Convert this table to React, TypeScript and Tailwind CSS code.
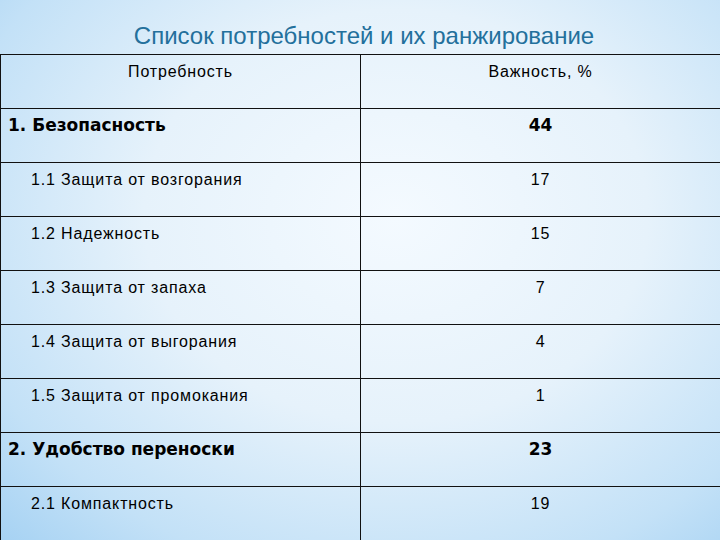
import React from 'react';

type Row = { label: string; value: string; main?: boolean };

const rows: Row[] = [
  { label: '1. Безопасность', value: '44', main: true },
  { label: '1.1 Защита от возгорания', value: '17' },
  { label: '1.2 Надежность', value: '15' },
  { label: '1.3 Защита от запаха', value: '7' },
  { label: '1.4 Защита от выгорания', value: '4' },
  { label: '1.5 Защита от промокания', value: '1' },
  { label: '2. Удобство переноски', value: '23', main: true },
  { label: '2.1 Компактность', value: '19' },
];

export default function App() {
  return (
    <div className="w-[720px] h-[540px] overflow-hidden bg-[radial-gradient(ellipse_at_55%_40%,#f4faff_0%,#e6f2fb_45%,#c3e1f7_80%,#a6d2f3_100%)] font-['Liberation_Sans',sans-serif] text-black">
      {/* Title */}
      <div className="h-[54px] flex items-start justify-center pt-[22px] pl-[8px]">
        <h1 className="text-[24px] leading-[28px] text-[#23709c]">
          Список потребностей и их ранжирование
        </h1>
      </div>

      {/* Table */}
      <div className="grid grid-cols-[360px_360px] text-[16px] leading-[20px] tracking-[0.85px]">
        <div className="h-[54px] border-t border-l border-[#111] text-center pt-[7px]">
          Потребность
        </div>
        <div className="h-[54px] border-t border-l border-[#111] text-center pt-[7px]">
          Важность, %
        </div>

        {rows.map((row) => (
          <React.Fragment key={row.label}>
            <div
              className={
                row.main
                  ? "h-[54px] border-t border-l border-[#111] pl-[7px] pt-[6px] text-[17px] tracking-normal font-bold font-['DejaVu_Sans',sans-serif]"
                  : 'h-[54px] border-t border-l border-[#111] pl-[30px] pt-[7px]'
              }
            >
              {row.label}
            </div>
            <div
              className={
                row.main
                  ? "h-[54px] border-t border-l border-[#111] text-center pt-[6px] text-[17px] tracking-normal font-bold font-['DejaVu_Sans',sans-serif]"
                  : 'h-[54px] border-t border-l border-[#111] text-center pt-[7px]'
              }
            >
              {row.value}
            </div>
          </React.Fragment>
        ))}
      </div>
    </div>
  );
}
